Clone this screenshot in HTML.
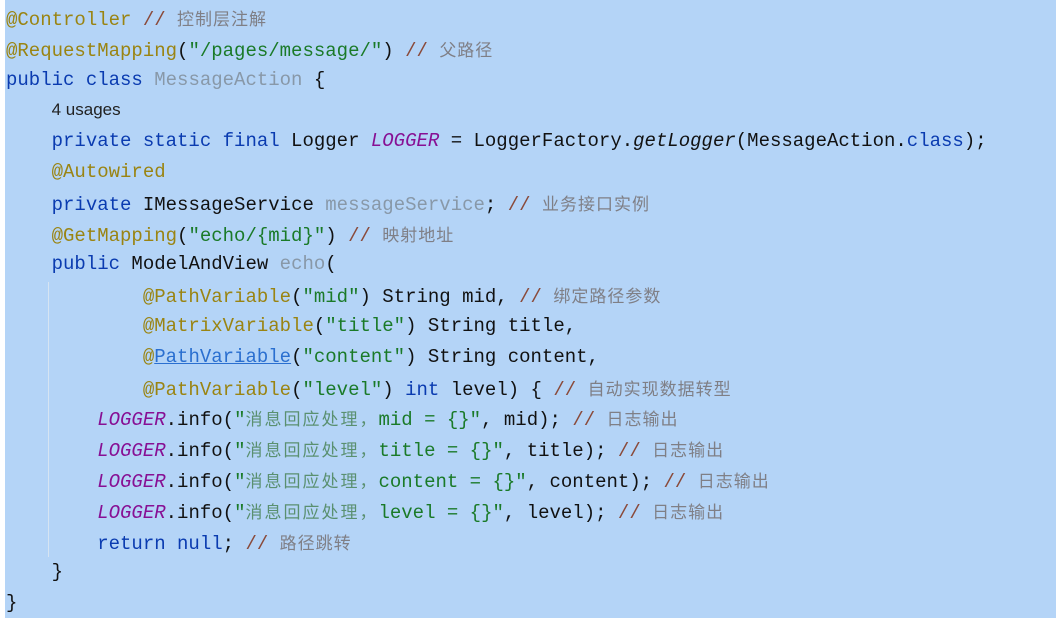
<!DOCTYPE html>
<html><head><meta charset="utf-8"><style>
html,body{margin:0;padding:0;width:1056px;height:624px;overflow:hidden;background:#fff}
#bg{position:absolute;left:5px;top:0;width:1051px;height:618px;background:#b4d4f7}
#code{position:absolute;left:6px;top:3px;font-family:"Liberation Mono","Noto Sans CJK SC",monospace;font-size:19px;color:#111}
#code div{height:30.8px;line-height:30.8px;white-space:pre;overflow:visible}
#code span{line-height:30.8px}
.k{color:#0a3bb0}.a{color:#9a8412}.s{color:#1a7a28}.c{color:#7f7f86;font-family:"Noto Sans CJK SC",sans-serif;font-size:17px;letter-spacing:1px}
.sl{color:#8a4a3a}.p{color:#871094;font-style:italic}.g{color:#8898a8}.u{font-family:"Liberation Sans",sans-serif;font-size:17px;color:#222}
.cs{font-family:"Noto Sans CJK SC",sans-serif;font-size:17px;letter-spacing:2px;color:#5a9070}
.lk{color:#2a6fd0;text-decoration:underline}
#guide{position:absolute;left:48px;top:282px;width:1px;height:275px;background:#d6e4f2}
</style></head><body>
<div id="bg"></div><div id="guide"></div>
<div id="code">
<div><span class="a">@Controller</span> <span class="sl">//</span> <span class="c">控制层注解</span></div>
<div><span class="a">@RequestMapping</span>(<span class="s">"/pages/message/"</span>) <span class="sl">//</span> <span class="c">父路径</span></div>
<div><span class="k">public class</span> <span class="g">MessageAction</span> {</div>
<div>    <span class="u">4 usages</span></div>
<div>    <span class="k">private static final</span> Logger <span class="p">LOGGER</span> = LoggerFactory.<i>getLogger</i>(MessageAction.<span class="k">class</span>);</div>
<div>    <span class="a">@Autowired</span></div>
<div>    <span class="k">private</span> IMessageService <span class="g">messageService</span>; <span class="sl">//</span> <span class="c">业务接口实例</span></div>
<div>    <span class="a">@GetMapping</span>(<span class="s">"echo/{mid}"</span>) <span class="sl">//</span> <span class="c">映射地址</span></div>
<div>    <span class="k">public</span> ModelAndView <span class="g">echo</span>(</div>
<div>            <span class="a">@PathVariable</span>(<span class="s">"mid"</span>) String mid, <span class="sl">//</span> <span class="c">绑定路径参数</span></div>
<div>            <span class="a">@MatrixVariable</span>(<span class="s">"title"</span>) String title,</div>
<div>            <span class="a">@</span><span class="lk">PathVariable</span>(<span class="s">"content"</span>) String content,</div>
<div>            <span class="a">@PathVariable</span>(<span class="s">"level"</span>) <span class="k">int</span> level) { <span class="sl">//</span> <span class="c">自动实现数据转型</span></div>
<div>        <span class="p">LOGGER</span>.info(<span class="s">"<span class="cs">消息回应处理，</span>mid = {}"</span>, mid); <span class="sl">//</span> <span class="c">日志输出</span></div>
<div>        <span class="p">LOGGER</span>.info(<span class="s">"<span class="cs">消息回应处理，</span>title = {}"</span>, title); <span class="sl">//</span> <span class="c">日志输出</span></div>
<div>        <span class="p">LOGGER</span>.info(<span class="s">"<span class="cs">消息回应处理，</span>content = {}"</span>, content); <span class="sl">//</span> <span class="c">日志输出</span></div>
<div>        <span class="p">LOGGER</span>.info(<span class="s">"<span class="cs">消息回应处理，</span>level = {}"</span>, level); <span class="sl">//</span> <span class="c">日志输出</span></div>
<div>        <span class="k">return null</span>; <span class="sl">//</span> <span class="c">路径跳转</span></div>
<div>    }</div>
<div>}</div>
</div>
</body></html>
